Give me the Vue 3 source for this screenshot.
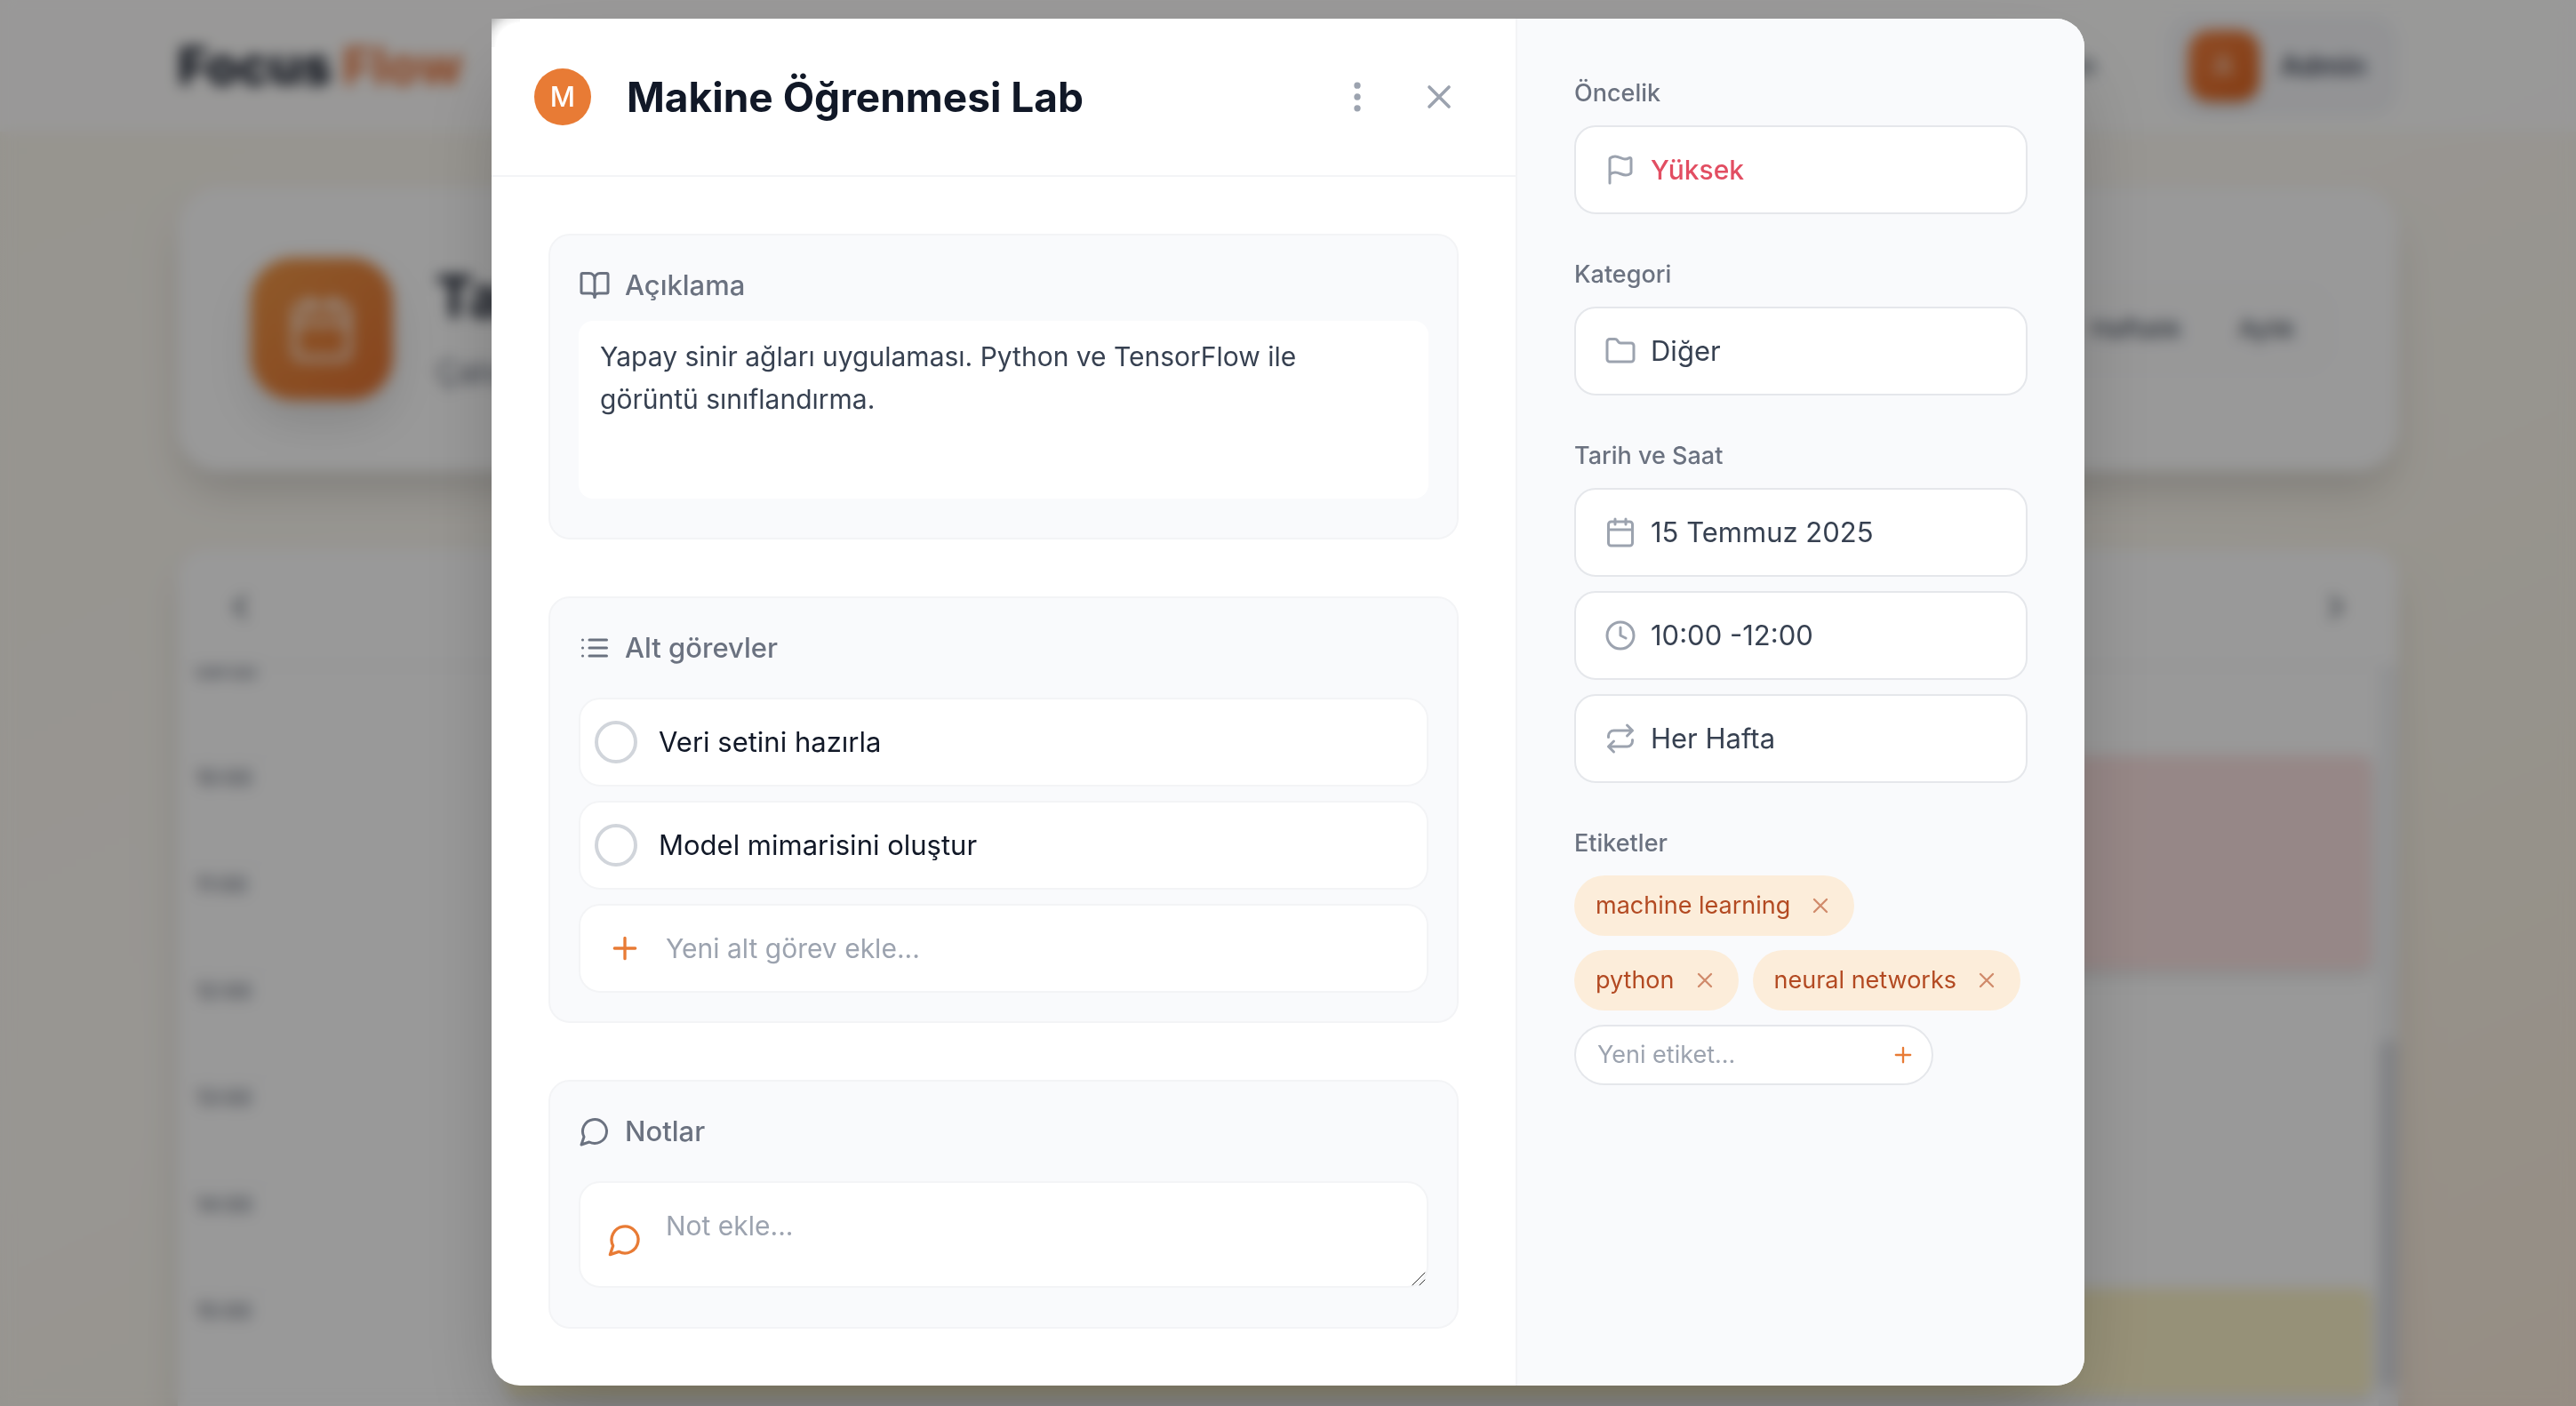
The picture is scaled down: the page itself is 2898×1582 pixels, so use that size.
<script setup>
import { ref } from 'vue'

const hours = ['09:00', '10:00', '11:00', '12:00', '13:00', '14:00', '15:00', '16:00']

const description = ref(
  'Yapay sinir ağları uygulaması. Python ve TensorFlow ile görüntü sınıflandırma.'
)
const subtasks = ref([
  { id: 1, text: 'Veri setini hazırla', done: false },
  { id: 2, text: 'Model mimarisini oluştur', done: false }
])
const tags = ref(['machine learning', 'python', 'neural networks'])
const newSubtask = ref('')
const newNote = ref('')
const newTag = ref('')

function removeTag(tag) {
  tags.value = tags.value.filter((t) => t !== tag)
}
function addTag() {
  const value = newTag.value.trim()
  if (value) tags.value.push(value)
  newTag.value = ''
}
</script>

<template>
  <div class="page">
    <header class="topbar">
      <a class="logo" href="#"><span class="logo-dark">Focus</span><span class="logo-accent">Flow</span></a>
      <nav class="topnav">
        <a class="nav-link" href="#">Takvim</a>
        <button class="user" type="button">
          <span class="user-avatar">A</span>
          <span>Admin</span>
        </button>
      </nav>
    </header>

    <main class="content">
      <section class="hero">
        <span class="hero-icon">
          <svg viewBox="0 0 24 24"><path d="M8 2v4M16 2v4M3 10h18" /><rect x="3" y="4" width="18" height="18" rx="2" /></svg>
        </span>
        <div class="hero-text">
          <h1>Takvim</h1>
          <p>Çalışma planı</p>
        </div>
        <div class="views">
          <button type="button">Haftalık</button>
          <button type="button">Aylık</button>
        </div>
      </section>

      <section class="calendar">
        <div class="calendar-head">
          <button type="button" aria-label="Önceki gün">
            <svg viewBox="0 0 24 24"><path d="m15 18-6-6 6-6" /></svg>
          </button>
          <button type="button" aria-label="Sonraki gün">
            <svg viewBox="0 0 24 24"><path d="m9 18 6-6-6-6" /></svg>
          </button>
        </div>
        <div class="calendar-body">
          <div class="hours">
            <div v-for="hour in hours" :key="hour" class="hour">{{ hour }}</div>
            <div class="event event-red"></div>
            <div class="event event-yellow"></div>
          </div>
          <div class="scroll-track"><div class="scroll-thumb"></div></div>
        </div>
      </section>
    </main>
  </div>

  <div class="overlay">
    <div class="modal" role="dialog" aria-modal="true" aria-labelledby="task-title">
      <div class="main-col">
        <header class="modal-head">
          <span class="avatar">M</span>
          <h2 id="task-title">Makine Öğrenmesi Lab</h2>
          <button class="icon-btn" type="button" aria-label="Seçenekler">
            <svg viewBox="0 0 24 24"><circle cx="12" cy="12" r="1" /><circle cx="12" cy="5" r="1" /><circle cx="12" cy="19" r="1" /></svg>
          </button>
          <button class="icon-btn" type="button" aria-label="Kapat">
            <svg viewBox="0 0 24 24"><path d="M18 6 6 18M6 6l12 12" /></svg>
          </button>
        </header>

        <div class="sections">
          <section class="card">
            <label class="card-title card-title-tight" for="description">
              <svg viewBox="0 0 24 24"><path d="M12 7v14" /><path d="M3 18a1 1 0 0 1-1-1V4a1 1 0 0 1 1-1h5a4 4 0 0 1 4 4 4 4 0 0 1 4-4h5a1 1 0 0 1 1 1v13a1 1 0 0 1-1 1h-6a3 3 0 0 0-3 3 3 3 0 0 0-3-3z" /></svg>
              Açıklama
            </label>
            <div class="area-wrap">
              <textarea id="description" v-model="description" class="description"></textarea>
            </div>
          </section>

          <section class="card">
            <h3 class="card-title">
              <svg viewBox="0 0 24 24"><path d="M3 6h.01M3 12h.01M3 18h.01M8 6h13M8 12h13M8 18h13" /></svg>
              Alt görevler
            </h3>
            <div class="subtasks">
              <label v-for="task in subtasks" :key="task.id" class="subtask">
                <input v-model="task.done" type="checkbox" />
                <span>{{ task.text }}</span>
              </label>
              <div class="field-wrap">
                <svg class="field-icon" viewBox="0 0 24 24"><path d="M5 12h14M12 5v14" /></svg>
                <input v-model="newSubtask" class="new-subtask" type="text" aria-label="Yeni alt görev" placeholder="Yeni alt görev ekle..." />
              </div>
            </div>
          </section>

          <section class="card">
            <label class="card-title" for="note">
              <svg viewBox="0 0 24 24"><path d="M7.9 20A9 9 0 1 0 4 16.1L2 22Z" /></svg>
              Notlar
            </label>
            <div class="area-wrap field-wrap">
              <svg class="field-icon" viewBox="0 0 24 24"><path d="M7.9 20A9 9 0 1 0 4 16.1L2 22Z" /></svg>
              <textarea id="note" v-model="newNote" class="note" placeholder="Not ekle..."></textarea>
              <svg class="grip" viewBox="0 0 16 16"><path d="M1 15 15 1M9 15l6-6" /></svg>
            </div>
          </section>
        </div>
      </div>

      <aside class="side-col">
        <div class="group">
          <label for="priority">Öncelik</label>
          <button id="priority" class="select priority" type="button">
            <svg viewBox="0 0 24 24"><path d="M4 22V4a1 1 0 0 1 .4-.8A6 6 0 0 1 8 2c3 0 5 2 7.333 2q2 0 3.067-.8A1 1 0 0 1 20 4v10a1 1 0 0 1-.4.8A6 6 0 0 1 16 16c-3 0-5-2-8-2a6 6 0 0 0-4 1.528" /></svg>
            <span>Yüksek</span>
          </button>
        </div>

        <div class="group">
          <label for="category">Kategori</label>
          <button id="category" class="select" type="button">
            <svg viewBox="0 0 24 24"><path d="M20 20a2 2 0 0 0 2-2V8a2 2 0 0 0-2-2h-7.9a2 2 0 0 1-1.69-.9L9.6 3.9A2 2 0 0 0 7.93 3H4a2 2 0 0 0-2 2v13a2 2 0 0 0 2 2Z" /></svg>
            <span>Diğer</span>
          </button>
        </div>

        <div class="group">
          <label for="date">Tarih ve Saat</label>
          <button id="date" class="select" type="button">
            <svg viewBox="0 0 24 24"><path d="M8 2v4M16 2v4M3 10h18" /><rect x="3" y="4" width="18" height="18" rx="2" /></svg>
            <span>15 Temmuz 2025</span>
          </button>
          <button class="select" type="button">
            <svg viewBox="0 0 24 24"><circle cx="12" cy="12" r="10" /><path d="M12 6v6l4 2" /></svg>
            <span>10:00 -12:00</span>
          </button>
          <button class="select" type="button">
            <svg viewBox="0 0 24 24"><path d="m17 2 4 4-4 4M3 11v-1a4 4 0 0 1 4-4h14M7 22l-4-4 4-4M21 13v1a4 4 0 0 1-4 4H3" /></svg>
            <span>Her Hafta</span>
          </button>
        </div>

        <div class="group">
          <label for="new-tag">Etiketler</label>
          <div class="tags">
            <span v-for="tag in tags" :key="tag" class="tag">
              {{ tag }}
              <button type="button" :aria-label="tag + ' etiketini kaldır'" @click="removeTag(tag)">
                <svg viewBox="0 0 24 24"><path d="M18 6 6 18M6 6l12 12" /></svg>
              </button>
            </span>
            <form class="tag-form" @submit.prevent="addTag">
              <input id="new-tag" v-model="newTag" type="text" placeholder="Yeni etiket..." />
              <button type="submit" aria-label="Etiket ekle">
                <svg viewBox="0 0 24 24"><path d="M5 12h14M12 5v14" /></svg>
              </button>
            </form>
          </div>
        </div>
      </aside>
    </div>
  </div>
</template>

<style>
body {
  margin: 0;
  overflow: hidden;
}
</style>

<style scoped>
* {
  box-sizing: border-box;
}

.page,
.overlay {
  font-family: Inter, 'Liberation Sans', sans-serif;
  font-size: 31px;
  line-height: 48px;
}

h1,
h2,
h3,
p {
  margin: 0;
}

button,
input,
textarea {
  font: inherit;
  color: inherit;
}

button {
  padding: 0;
  border: 0;
  background: none;
  cursor: pointer;
}

input,
textarea {
  display: block;
  margin: 0;
  outline: 0;
  resize: none;
}

::placeholder {
  color: #9ca3af;
  opacity: 1;
}

svg {
  display: block;
  flex: none;
  width: 36px;
  height: 36px;
  fill: none;
  stroke: currentColor;
  stroke-width: 2;
  stroke-linecap: round;
  stroke-linejoin: round;
}

/* Calendar page behind the dialog */
.page {
  height: 100vh;
  overflow: hidden;
  background: linear-gradient(155deg, #fbf7ee 0%, #fdfaf4 45%, #fbf6ea 70%, #fbecdc 100%);
}

.topbar {
  display: flex;
  align-items: center;
  justify-content: space-between;
  height: 148px;
  padding: 0 200px;
  background: rgba(255, 255, 255, 0.85);
}

.logo {
  display: flex;
  gap: 12px;
  font-size: 58px;
  font-weight: 800;
  text-decoration: none;
}

.logo-dark {
  color: #111827;
}

.logo-accent {
  color: #e87b45;
}

.topnav {
  display: flex;
  align-items: center;
  gap: 80px;
}

.nav-link {
  font-weight: 500;
  color: #4b5563;
  text-decoration: none;
}

.user {
  display: flex;
  align-items: center;
  gap: 24px;
  height: 116px;
  padding: 0 36px 0 24px;
  border-radius: 32px;
  background: #f5f6f9;
  font-weight: 600;
  color: #374151;
}

.user-avatar {
  display: flex;
  align-items: center;
  justify-content: center;
  width: 80px;
  height: 80px;
  border-radius: 24px;
  background: linear-gradient(135deg, #f08040, #dc6420);
  color: rgba(255, 255, 255, 0.7);
  box-shadow: 0 8px 12px rgba(0, 0, 0, 0.1);
}

.content {
  display: flex;
  flex-direction: column;
  gap: 88px;
  padding: 62px 200px;
}

.hero {
  display: flex;
  align-items: center;
  gap: 48px;
  padding: 80px 72px 80px 82px;
  border-radius: 48px;
  background: #fff;
  box-shadow: 0 28px 48px -8px rgba(0, 0, 0, 0.16);
}

.hero-icon {
  display: flex;
  align-items: center;
  justify-content: center;
  width: 160px;
  height: 160px;
  border-radius: 48px;
  background: linear-gradient(135deg, #f09848, #e07030);
  color: rgba(255, 255, 255, 0.8);
  box-shadow: 0 24px 48px rgba(0, 0, 0, 0.12);
}

.hero-icon svg {
  width: 80px;
  height: 80px;
}

.hero-text {
  flex: 1;
}

.hero-text h1 {
  font-size: 64px;
  line-height: 80px;
  font-weight: 700;
  color: #111827;
}

.hero-text p {
  font-size: 36px;
  line-height: 56px;
  margin-top: 16px;
  color: #6b7280;
}

.views {
  display: flex;
  align-items: center;
  gap: 64px;
  height: 100px;
  padding: 0 44px;
  border-radius: 32px;
  background: #fdfdfe;
}

.views button {
  font-size: 28px;
  font-weight: 500;
  color: #4b5563;
}

.calendar {
  border-radius: 32px;
  overflow: hidden;
  background: #fff;
  box-shadow: 0 24px 40px rgba(0, 0, 0, 0.1);
}

.calendar-head {
  display: flex;
  align-items: center;
  justify-content: space-between;
  height: 132px;
  padding: 0 48px;
  border-bottom: 2px solid #f3f4f6;
  color: #4b5563;
}

.calendar-head svg {
  width: 44px;
  height: 44px;
}

.calendar-body {
  display: flex;
  height: 960px;
  overflow: hidden;
}

.hours {
  position: relative;
  flex: 1;
  margin-top: -20px;
}

.hour {
  height: 120px;
  padding-left: 20px;
  border-top: 2px solid #fafafb;
  font-size: 24px;
  font-weight: 500;
  color: #6b7280;
}

.event {
  position: absolute;
  left: 370px;
  right: 8px;
  border-radius: 12px;
  box-shadow: 0 8px 16px rgba(0, 0, 0, 0.1);
}

.event-red {
  top: 120px;
  height: 240px;
  background: #fbe2e1;
}

.event-yellow {
  top: 720px;
  height: 120px;
  background: #fbf2c8;
}

.scroll-track {
  width: 22px;
  padding-top: 420px;
  background: #f3f4f6;
}

.scroll-thumb {
  height: 392px;
  border-radius: 12px;
  background: #d9dbe0;
}

/* Dialog */
.overlay {
  position: fixed;
  inset: 0;
  display: flex;
  align-items: center;
  justify-content: center;
  padding: 0 32px 2px;
  background: rgba(0, 0, 0, 0.4);
  backdrop-filter: blur(8px);
}

.modal {
  display: flex;
  width: 100%;
  max-width: 1792px;
  border-radius: 0 32px 32px 32px;
  background: #fff;
  box-shadow: 0 50px 100px -24px rgba(0, 0, 0, 0.3);
}

.main-col {
  flex: 1;
  min-width: 0;
}

.modal-head {
  display: flex;
  align-items: center;
  height: 178px;
  padding: 0 48px;
  border-bottom: 2px solid #f3f4f6;
  background: radial-gradient(circle at 32px 32px, transparent 27px, rgba(0, 0, 0, 0.08) 34px, rgba(0, 0, 0, 0.32) 46px)
    no-repeat 0 0 / 32px 32px;
}

.avatar {
  display: flex;
  align-items: center;
  justify-content: center;
  width: 64px;
  height: 64px;
  margin-right: 40px;
  border-radius: 50%;
  background: #e87b35;
  font-weight: 500;
  color: #fff;
}

.modal-head h2 {
  flex: 1;
  font-size: 46px;
  line-height: 64px;
  font-weight: 700;
  color: #111827;
}

.icon-btn {
  display: flex;
  align-items: center;
  justify-content: center;
  width: 76px;
  height: 76px;
  margin-left: 16px;
  color: #9ca3af;
}

.icon-btn svg {
  width: 44px;
  height: 44px;
}

.sections {
  display: flex;
  flex-direction: column;
  gap: 64px;
  padding: 64px;
}

.card {
  padding: 32px;
  border: 2px solid #f3f4f6;
  border-radius: 24px;
  background: #f9fafc;
}

.card-title {
  display: flex;
  align-items: center;
  gap: 16px;
  margin-bottom: 32px;
  font-size: inherit;
  font-weight: 500;
  color: #6b7280;
}

.card-title-tight {
  margin-bottom: 16px;
}

.area-wrap {
  padding-bottom: 12px;
}

.description {
  width: 100%;
  height: 200px;
  padding: 16px 48px 16px 24px;
  border: 0;
  border-radius: 16px;
  background: #fff;
  font-size: 30px;
  color: #374151;
}

.subtasks {
  display: flex;
  flex-direction: column;
  gap: 16px;
}

.subtask {
  display: flex;
  align-items: center;
  gap: 24px;
  height: 100px;
  padding: 0 16px;
  border: 2px solid #f3f4f6;
  border-radius: 24px;
  background: #fff;
  color: #111827;
}

.subtask input {
  appearance: none;
  width: 48px;
  height: 48px;
  border: 4px solid #d1d5db;
  border-radius: 50%;
}

.subtask input:checked {
  border-color: #e87b35;
  background: #e87b35;
}

.field-wrap {
  position: relative;
}

.field-icon {
  position: absolute;
  top: 50%;
  left: 32px;
  width: 40px;
  height: 40px;
  margin-top: -20px;
  color: #e87b35;
}

.new-subtask,
.note {
  width: 100%;
  height: 100px;
  padding: 24px 24px 24px 96px;
  border: 2px solid #f3f4f6;
  border-radius: 24px;
  background: #fff;
  font-size: 30px;
  color: #111827;
}

.note {
  height: 120px;
}

.grip {
  position: absolute;
  right: 3px;
  bottom: 14px;
  width: 16px;
  height: 16px;
  stroke-width: 1;
  color: #333;
}

/* Sidebar */
.side-col {
  display: flex;
  flex-direction: column;
  gap: 48px;
  width: 640px;
  padding: 64px;
  border-left: 2px solid #f3f4f6;
  border-radius: 0 32px 32px 0;
  background: #f9fafc;
}

.group {
  display: flex;
  flex-direction: column;
  gap: 16px;
}

.group > label {
  font-size: 27px;
  line-height: 40px;
  font-weight: 500;
  color: #6b7280;
}

.select {
  display: flex;
  align-items: center;
  gap: 16px;
  height: 100px;
  padding: 0 32px;
  border: 2px solid #e5e7eb;
  border-radius: 24px;
  background: #fff;
  color: #374151;
}

.select svg {
  color: #9ca3af;
}

.priority {
  font-size: 30px;
  font-weight: 500;
  color: #e24e62;
}

.tags {
  display: flex;
  flex-wrap: wrap;
  gap: 16px;
}

.tag,
.tag-form {
  display: flex;
  align-items: center;
  height: 68px;
  padding: 0 24px;
  border-radius: 34px;
  font-size: 27px;
}

.tag {
  gap: 20px;
  background: #fcedda;
  color: #b34a22;
}

.tag button {
  opacity: 0.6;
}

.tag svg,
.tag-form svg {
  width: 28px;
  height: 28px;
}

.tag-form {
  width: 404px;
  padding-right: 18px;
  border: 2px solid #e5e7eb;
  background: #fff;
}

.tag-form input {
  flex: 1;
  min-width: 0;
  padding: 0;
  border: 0;
  background: none;
  color: #374151;
}

.tag-form button {
  color: #e87b35;
}
</style>
